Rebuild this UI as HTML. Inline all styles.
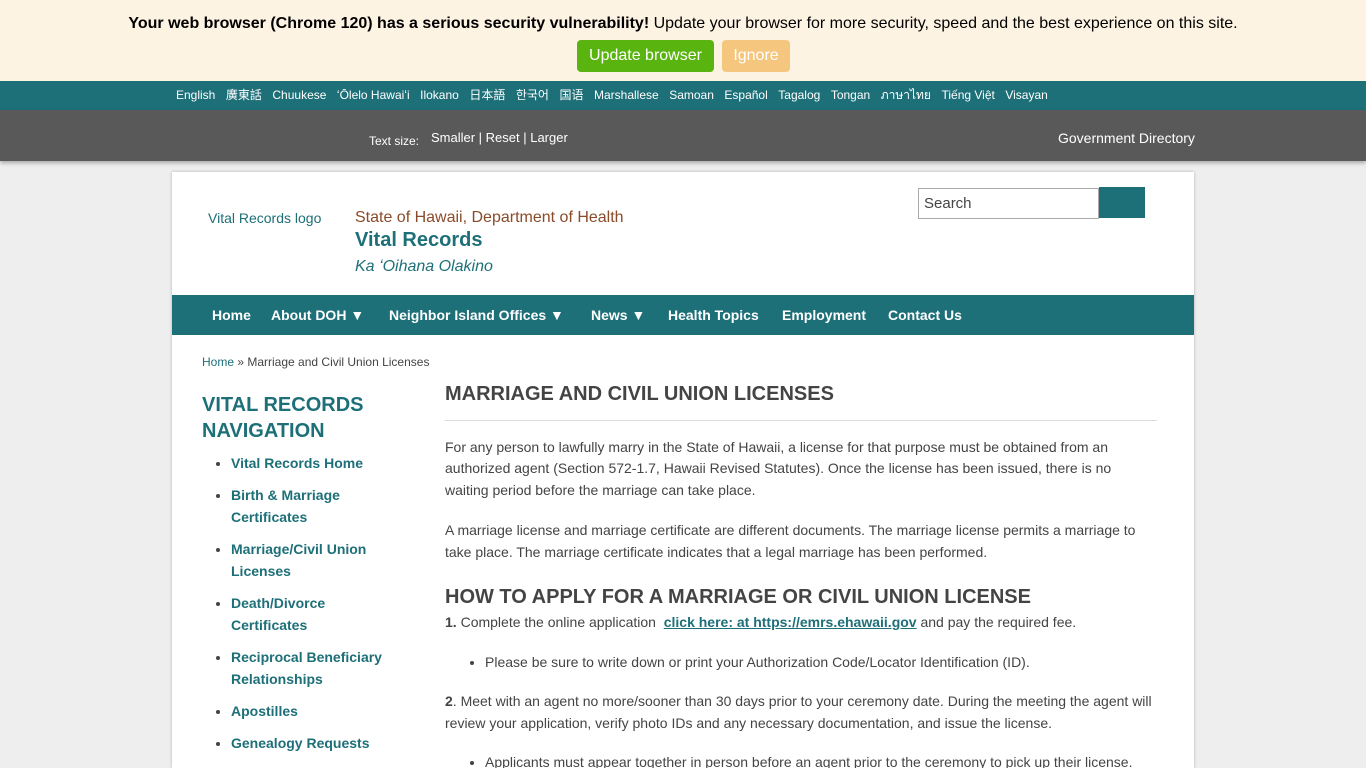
<!DOCTYPE html>
<html style="overflow:hidden"><head><meta charset="utf-8"><style>
*{margin:0;padding:0;box-sizing:border-box}
html,body{width:1366px;height:768px;overflow:hidden}
body{background:#eeeeee;font-family:"Liberation Sans","Noto Sans CJK SC",sans-serif;color:#444;position:relative}
a{text-decoration:none}
.banner{position:absolute;left:0;top:0;width:1366px;height:81px;background:#fdf3e3;text-align:center}
.banner p{position:absolute;top:15px;left:0;width:1366px;color:#000;font-size:16px}
.btn{position:absolute;top:40px;height:32px;border-radius:4px;color:#fff;font-size:16px;line-height:32px;text-align:center}
.lang{position:absolute;top:81px;left:0;width:1366px;height:29px;background:#1d6f78;color:#fff;font-size:12px;line-height:29px}
.lang span{margin-right:10.5px}
.gray{position:absolute;top:110px;left:0;width:1366px;height:51px;background:#595959;color:#fff;box-shadow:0 2px 4px rgba(0,0,0,.3)}
.card{position:absolute;left:172px;top:172px;width:1022px;height:596px;background:#fff;box-shadow:0 0 3px rgba(0,0,0,.25);overflow:hidden}
.nav{position:absolute;left:0;top:123px;width:1022px;height:40px;background:#1d6f78;color:#fff;font-weight:bold;font-size:14px;line-height:40px}
.nav span{position:absolute}
.side a{color:#1d6f78;font-weight:bold;font-size:14px}
.side li{margin-bottom:10px;line-height:22px;font-size:14px}
.main{position:absolute;width:712px;font-size:14px;line-height:21.5px;color:#444}
</style></head><body>
<div class="banner"><p><b>Your web browser (Chrome 120) has a serious security vulnerability!</b> Update your browser for more security, speed and the best experience on this site.</p>
<div class="btn" style="left:577px;width:137px;background:#5ab40f">Update browser</div>
<div class="btn" style="left:722px;width:68px;background:#f4c67e">Ignore</div></div>
<div class="lang"><div style="position:absolute;left:176px;white-space:nowrap">
<span>English</span><span>廣東話</span><span>Chuukese</span><span>ʻŌlelo Hawaiʻi</span><span>Ilokano</span><span>日本語</span><span>한국어</span><span>国语</span><span>Marshallese</span><span>Samoan</span><span>Español</span><span>Tagalog</span><span>Tongan</span><span>ภาษาไทย</span><span>Tiếng Việt</span><span>Visayan</span></div></div>
<div class="gray"><span style="position:absolute;left:369px;top:24px;font-size:12px">Text size:</span><span style="position:absolute;left:431px;top:20px;font-size:13px">Smaller | Reset | Larger</span><span style="position:absolute;left:1058px;top:20px;font-size:14px">Government Directory</span></div>
<div class="card">
<div style="position:absolute;left:36px;top:38px;font-size:14px;color:#1d6f78">Vital Records logo</div>
<div style="position:absolute;left:183px;top:37px;font-size:16px;color:#8a4b2a">State of Hawaii, Department of Health</div>
<div style="position:absolute;left:183px;top:57px;font-size:20px;color:#1d6f78;font-weight:bold">Vital Records</div>
<div style="position:absolute;left:183px;top:86px;font-size:16px;color:#1d6f78;font-style:italic">Ka ʻOihana Olakino</div>
<div style="position:absolute;left:746px;top:16px;width:181px;height:31px;border:1px solid #aaa;font-size:15px;line-height:29px;padding-left:5px">Search</div>
<div style="position:absolute;left:927px;top:15px;width:46px;height:31px;background:#1d6f78"></div>
<div class="nav"><span style="left:40px">Home</span><span style="left:99px">About DOH ▼</span><span style="left:217px">Neighbor Island Offices ▼</span><span style="left:419px">News ▼</span><span style="left:496px">Health Topics</span><span style="left:610px">Employment</span><span style="left:716px">Contact Us</span></div>
<div style="position:absolute;left:30px;top:183px;font-size:12px"><span style="color:#1d6f78">Home</span> » Marriage and Civil Union Licenses</div>
<div class="side" style="position:absolute;left:30px;top:220px;width:200px">
<div style="color:#1d6f78;font-weight:bold;font-size:20px;line-height:26px;margin-bottom:8px">VITAL RECORDS NAVIGATION</div>
<ul style="padding-left:29px">
<li><a>Vital Records Home</a></li><li><a>Birth &amp; Marriage Certificates</a></li><li><a>Marriage/Civil Union Licenses</a></li><li><a>Death/Divorce Certificates</a></li><li><a>Reciprocal Beneficiary Relationships</a></li><li><a>Apostilles</a></li><li><a>Genealogy Requests</a></li></ul></div>
</div>
<div class="main" style="left:445px;top:384px">
<h1 style="font-size:20px;color:#444;padding-bottom:14px;border-bottom:1px solid #ddd;margin-bottom:16px">MARRIAGE AND CIVIL UNION LICENSES</h1>
<p style="margin-bottom:19px">For any person to lawfully marry in the State of Hawaii, a license for that purpose must be obtained from an authorized agent (Section 572-1.7, Hawaii Revised Statutes). Once the license has been issued, there is no waiting period before the marriage can take place.</p>
<p style="margin-bottom:22px">A marriage license and marriage certificate are different documents. The marriage license permits a marriage to take place. The marriage certificate indicates that a legal marriage has been performed.</p>
<h2 style="font-size:20px;line-height:24px;margin-bottom:3px">HOW TO APPLY FOR A MARRIAGE OR CIVIL UNION LICENSE</h2>
<p><b>1.</b> Complete the online application &nbsp;<a style="color:#1d6f78;font-weight:bold;text-decoration:underline">click here: at https://emrs.ehawaii.gov</a> and pay the required fee.</p>
<ul style="padding-left:40px;margin:18px 0"><li>Please be sure to write down or print your Authorization Code/Locator Identification (ID).</li></ul>
<p><b>2</b>. Meet with an agent no more/sooner than 30 days prior to your ceremony date. During the meeting the agent will review your application, verify photo IDs and any necessary documentation, and issue the license.</p>
<ul style="padding-left:40px;margin:18px 0"><li>Applicants must appear together in person before an agent prior to the ceremony to pick up their license.</li></ul>
</div>
</body></html>
